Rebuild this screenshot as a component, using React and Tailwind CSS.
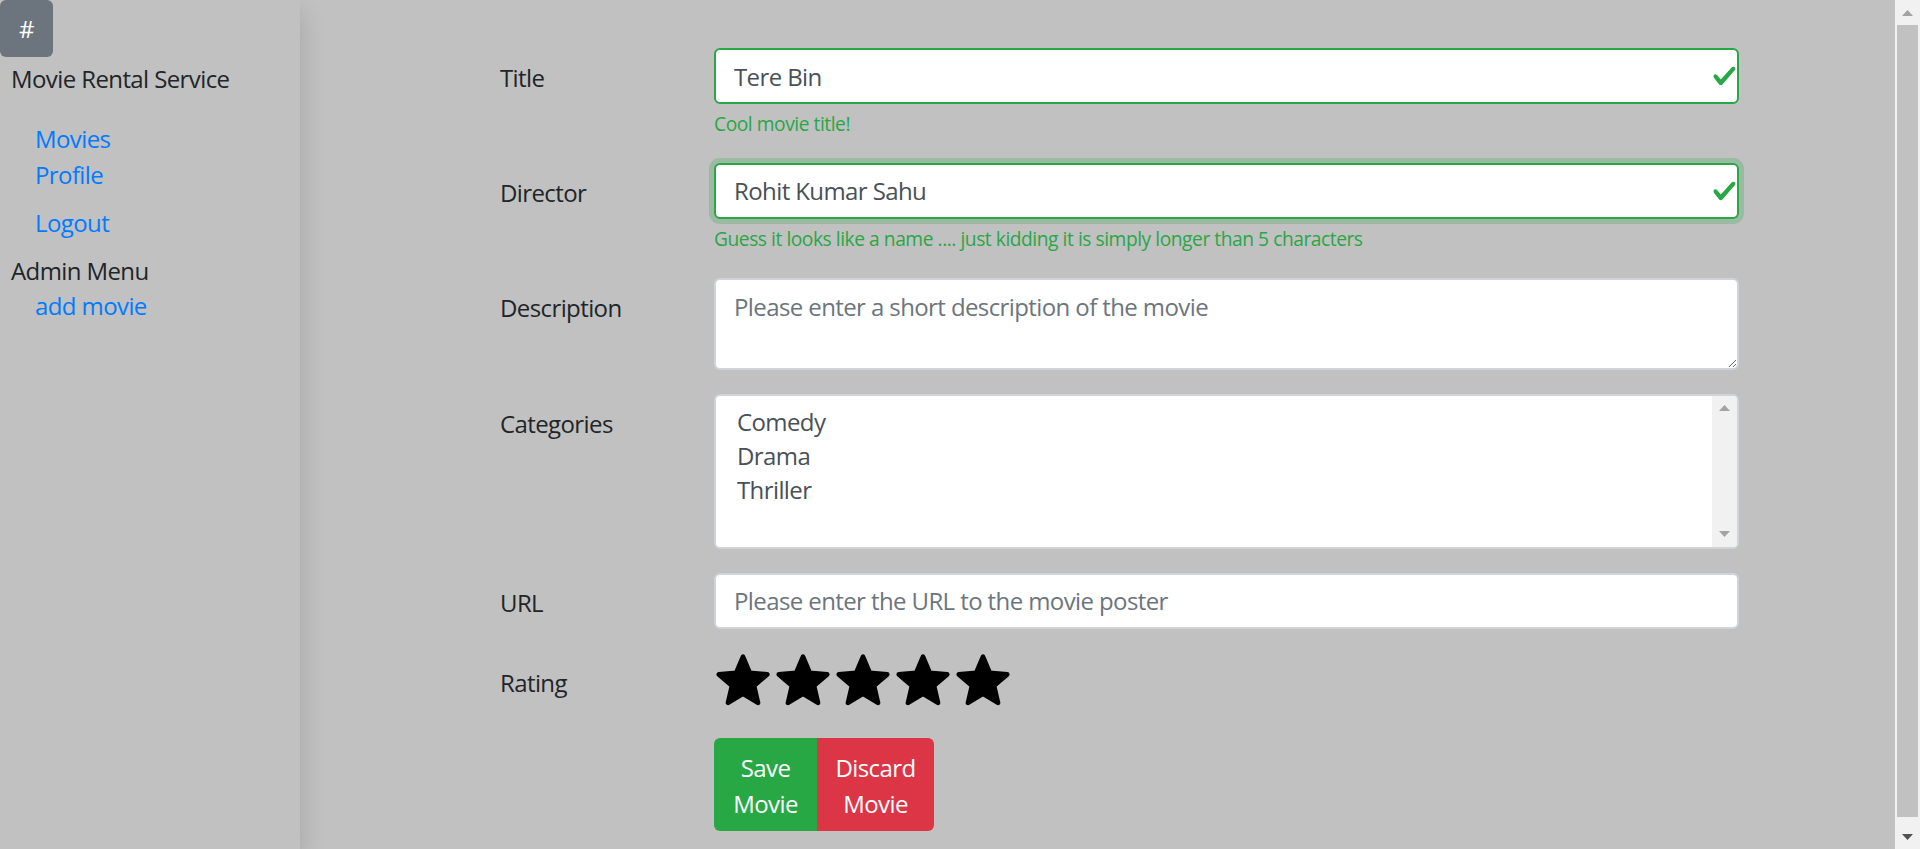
import React from "react";

function Check() {
  return (
    <svg
      className="pointer-events-none absolute right-[2px] top-1/2 h-[25px] w-[25px] -translate-y-1/2"
      viewBox="0 0 8 8"
    >
      <path
        fill="#28a745"
        d="M2.3 6.73L.6 4.53c-.4-1.04.46-1.4 1.1-.8l1.1 1.4 3.4-3.8c.6-.63 1.6-.27 1.2.7l-4 4.6c-.43.5-.8.4-1.1.1z"
      />
    </svg>
  );
}

function Star() {
  return (
    <svg width="58" height="58" viewBox="0 0 24 24" className="shrink-0">
      <path
        d="M12 17.27L18.18 21l-1.64-7.03L22 9.24l-7.19-.61L12 2 9.19 8.63 2 9.24l5.46 4.73L5.82 21z"
        fill="#000"
        stroke="#000"
        strokeWidth="2"
        strokeLinejoin="round"
      />
    </svg>
  );
}

function Arrow({ up, color }) {
  return (
    <svg width="11" height="6" viewBox="0 0 11 6">
      <polygon points={up ? "5.5,0 11,6 0,6" : "0,0 11,0 5.5,6"} fill={color} />
    </svg>
  );
}

function Row({ label, children, className = "" }) {
  return (
    <div className={"flex " + className}>
      <div className="w-[214px] shrink-0 pt-[12px] leading-[36px]">{label}</div>
      <div className="min-w-0 flex-1">{children}</div>
    </div>
  );
}

export default function App() {
  return (
    <div className="flex h-[849px] w-full overflow-hidden bg-[#c1c1c1] font-['Open_Sans',sans-serif] text-[24px] leading-[36px] tracking-[-0.6px] text-[#212529]">
      <aside className="relative z-10 w-[300px] shrink-0 bg-[#c1c1c1] shadow-[0_12px_24px_rgba(0,0,0,0.15)]">
        <div className="flex h-[57px] w-[53px] items-center justify-center rounded-[6px] bg-[#6c757d] text-white">
          #
        </div>
        <div className="mt-[4px] pl-[11px]">Movie Rental Service</div>
        <ul className="mt-[24px] pl-[35px] text-[#007bff]">
          <li>Movies</li>
          <li>Profile</li>
          <li className="mt-[12px]">Logout</li>
        </ul>
        <div className="mt-[12px] pl-[11px]">Admin Menu</div>
        <div className="-mt-px pl-[35px] text-[#007bff]">add movie</div>
      </aside>

      <main className="min-w-0 flex-1 pl-[200px] pt-[48px]">
        <form className="flex w-[1239px] flex-col">
          <Row label="Title" className="mb-[24px]">
            <div className="relative">
              <input
                readOnly
                defaultValue="Tere Bin"
                className="h-[56px] w-full rounded-[6px] border-2 border-[#28a745] bg-white pl-[18px] pr-[40px] text-[#495057] outline-none"
              />
              <Check />
            </div>
            <div className="mt-[6px] text-[19.2px] leading-[28.8px] tracking-[-0.45px] text-[#28a745]">
              Cool movie title!
            </div>
          </Row>

          <Row label="Director" className="mb-[24px]">
            <div className="relative">
              <input
                readOnly
                defaultValue="Rohit Kumar Sahu"
                className="h-[56px] w-full rounded-[6px] border-2 border-[#28a745] bg-white pl-[18px] pr-[40px] text-[#495057] shadow-[0_0_0_5px_rgba(40,167,69,0.25)] outline-none"
              />
              <Check />
            </div>
            <div className="mt-[6px] text-[19.2px] leading-[28.8px] tracking-[-0.45px] text-[#28a745]">
              Guess it looks like a name .... just kidding it is simply longer than 5 characters
            </div>
          </Row>

          <Row label="Description" className="mb-[24px]">
            <textarea
              readOnly
              placeholder="Please enter a short description of the movie"
              className="block h-[92px] w-full resize rounded-[6px] border-2 border-[#ced4da] bg-white px-[18px] py-[9px] text-[#495057] outline-none placeholder:text-[#6c757d] placeholder:opacity-100"
            />
          </Row>

          <Row label="Categories" className="mb-[24px]">
            <div className="flex h-[155px] w-full overflow-hidden rounded-[6px] border-2 border-[#ced4da] bg-white text-[#495057]">
              <div className="flex-1 pl-[21px] pt-[9px] leading-[34px]">
                <div>Comedy</div>
                <div>Drama</div>
                <div>Thriller</div>
              </div>
              <div className="flex w-[25px] shrink-0 flex-col justify-between bg-[#f1f1f1]">
                <div className="flex h-[25px] items-center justify-center">
                  <Arrow up color="#a3a3a3" />
                </div>
                <div className="flex h-[25px] items-center justify-center">
                  <Arrow color="#a3a3a3" />
                </div>
              </div>
            </div>
          </Row>

          <Row label="URL" className="mb-[24px]">
            <input
              readOnly
              placeholder="Please enter the URL to the movie poster"
              className="h-[56px] w-full rounded-[6px] border-2 border-[#ced4da] bg-white px-[18px] text-[#495057] outline-none placeholder:text-[#6c757d] placeholder:opacity-100"
            />
          </Row>

          <Row label="Rating" className="mb-[24px]">
            <div className="-mt-px flex h-[62px] gap-[2px]">
              <Star />
              <Star />
              <Star />
              <Star />
              <Star />
            </div>
          </Row>

          <Row label="">
            <div className="flex">
              <button
                type="button"
                className="flex h-[93px] w-[103px] flex-col items-center justify-center rounded-l-[6px] bg-[#28a745] pt-[4px] leading-[36px] text-white"
              >
                <span>Save</span>
                <span>Movie</span>
              </button>
              <button
                type="button"
                className="flex h-[93px] w-[117px] flex-col items-center justify-center rounded-r-[6px] bg-[#dc3545] pt-[4px] leading-[36px] text-white"
              >
                <span>Discard</span>
                <span>Movie</span>
              </button>
            </div>
          </Row>
        </form>
      </main>

      <div className="flex w-[25px] shrink-0 flex-col bg-[#f1f1f1]">
        <div className="flex h-[25px] shrink-0 items-center justify-center">
          <Arrow up color="#a3a3a3" />
        </div>
        <div className="mx-[2px] h-[792px] shrink-0 bg-[#c1c1c1]" />
        <div className="flex-1" />
        <div className="flex h-[25px] shrink-0 items-center justify-center">
          <Arrow color="#505050" />
        </div>
      </div>
    </div>
  );
}
